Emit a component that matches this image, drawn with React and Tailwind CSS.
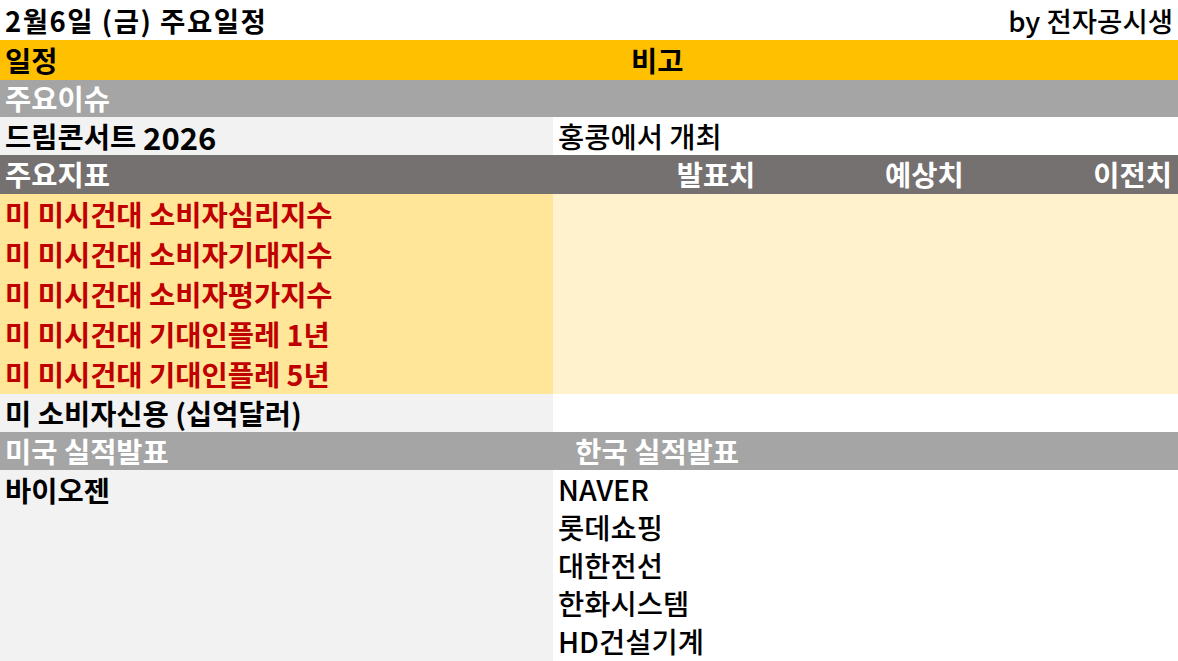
import React from 'react';

const font = { fontFamily: '"Noto Sans CJK KR", "Noto Sans", sans-serif' };

const redRows = [
  '미 미시건대 소비자심리지수',
  '미 미시건대 소비자기대지수',
  '미 미시건대 소비자평가지수',
  '미 미시건대 기대인플레 1년',
  '미 미시건대 기대인플레 5년',
];

const krEarnings = ['NAVER', '롯데쇼핑', '대한전선', '한화시스템', 'HD건설기계'];

export default function App() {
  return (
    <div
      className="w-[1178px] h-[661px] overflow-hidden bg-white text-black text-[28.5px] leading-none"
      style={font}
    >
      {/* title */}
      <div className="flex justify-between h-[40px] px-[5px] leading-[40px]">
        <span className="font-bold text-[27.5px] tracking-[1.5px]">2월6일 (금) 주요일정</span>
        <span className="font-medium text-[27.5px]">by 전자공시생</span>
      </div>

      {/* header */}
      <div className="flex h-[40px] bg-[#FFC000] font-bold">
        <div className="w-[553px] flex items-center pl-[5px]">일정</div>
        <div className="flex-1 grid grid-cols-3">
          <div className="flex items-center justify-center">비고</div>
        </div>
      </div>

      {/* 주요이슈 */}
      <div className="flex items-center h-[37px] bg-[#A5A5A5] text-white font-bold pl-[5px]">
        주요이슈
      </div>
      <div className="flex h-[38px]">
        <div className="w-[553px] bg-[#F2F2F2] flex items-center pl-[5px] font-bold">
          드림콘서트 <span className="ml-[7px] text-[31px]">2026</span>
        </div>
        <div className="flex-1 flex items-center pl-[5px] font-medium">홍콩에서 개최</div>
      </div>

      {/* 주요지표 */}
      <div className="flex h-[39px] bg-[#767171] text-white font-bold">
        <div className="w-[553px] flex items-center pl-[5px]">주요지표</div>
        <div className="flex-1 grid grid-cols-3">
          <div className="flex items-center justify-end pr-[6px]">발표치</div>
          <div className="flex items-center justify-end pr-[6px]">예상치</div>
          <div className="flex items-center justify-end pr-[6px]">이전치</div>
        </div>
      </div>

      <div className="flex">
        <div className="w-[553px] bg-[#FFE699] flex flex-col">
          {redRows.map((t) => (
            <div key={t} className="h-[40px] flex items-center pl-[5px] text-[#C00000] font-bold">
              {t}
            </div>
          ))}
        </div>
        <div className="flex-1 bg-[#FFF2CC]" />
      </div>

      <div className="flex h-[38px]">
        <div className="w-[553px] bg-[#F2F2F2] flex items-center pl-[5px] font-bold">
          미 소비자신용 (십억달러)
        </div>
        <div className="flex-1" />
      </div>

      {/* 실적발표 */}
      <div className="flex h-[38px] bg-[#A5A5A5] text-white font-bold">
        <div className="w-[553px] flex items-center pl-[5px]">미국 실적발표</div>
        <div className="flex-1 grid grid-cols-3">
          <div className="flex items-center justify-center">한국 실적발표</div>
        </div>
      </div>

      <div className="flex h-[191px]">
        <div className="w-[553px] bg-[#F2F2F2]">
          <div className="h-[40px] flex items-center pl-[5px] font-bold">바이오젠</div>
        </div>
        <div className="flex-1 flex flex-col">
          {krEarnings.map((t) => (
            <div key={t} className="h-[38px] flex items-center pl-[5px] font-medium">
              {t}
            </div>
          ))}
        </div>
      </div>
    </div>
  );
}
